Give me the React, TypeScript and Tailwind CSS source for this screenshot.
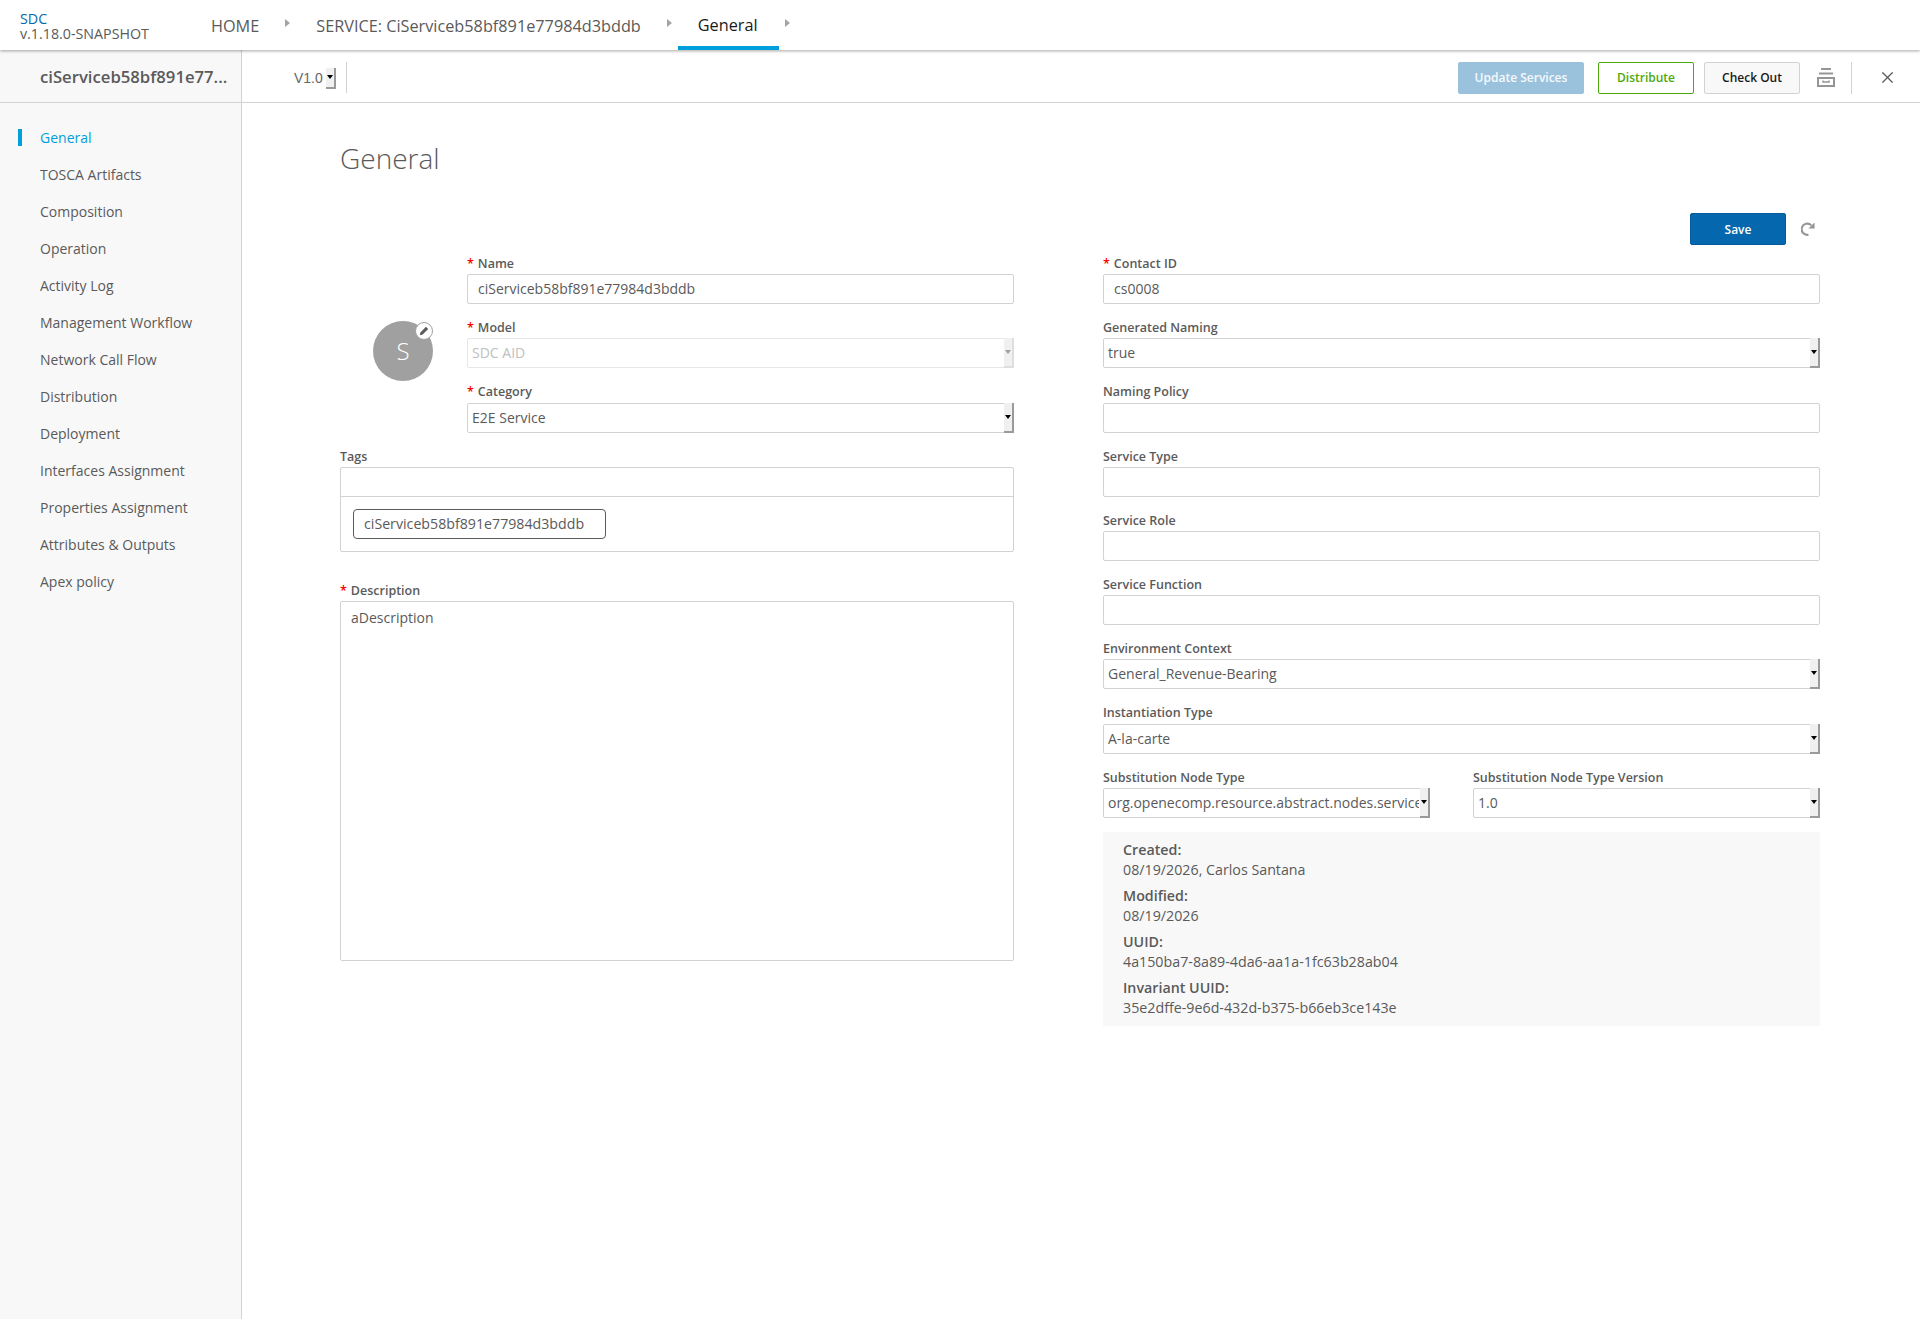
import { X } from 'lucide-react';

const navItems = [
  'General',
  'TOSCA Artifacts',
  'Composition',
  'Operation',
  'Activity Log',
  'Management Workflow',
  'Network Call Flow',
  'Distribution',
  'Deployment',
  'Interfaces Assignment',
  'Properties Assignment',
  'Attributes & Outputs',
  'Apex policy',
];

function Arrow() {
  return <span className="mb-1 mx-[6px] h-0 w-0 border-y-[4px] border-l-[5px] border-y-transparent border-l-[#a3a3a3]" />;
}

function Label({ text, required }: { text: string; required?: boolean }) {
  return (
    <label className="block h-[20.2px] text-[12.5px] font-semibold leading-[20px] text-[#5a5a5a]">
      {required && <span className="mr-1 text-[#f00]">*</span>}
      {text}
    </label>
  );
}

function TextField({ label, required, value = '' }: { label: string; required?: boolean; value?: string }) {
  return (
    <div className="mb-[14px]">
      <Label text={label} required={required} />
      <input
        readOnly
        value={value}
        className="block h-[30px] w-full rounded-[2px] border border-[#d2d2d2] bg-white px-[10px] pb-[2px] text-sm text-[#5a5a5a] outline-none"
      />
    </div>
  );
}

// old style native dropdown button, sits over the right edge of the select
function SelectButton({ disabled }: { disabled?: boolean }) {
  return (
    <span
      className={
        'pointer-events-none absolute bottom-0 right-0 top-0 flex w-[10px] items-center justify-center border-b-2 border-r-2 bg-[#f0f0f0] ' +
        (disabled ? 'border-[#dedede]' : 'border-[#9a9a9a]')
      }
    >
      <span
        className={
          'h-0 w-0 border-x-[3px] border-t-[4px] border-x-transparent ' + (disabled ? 'border-t-[#a0a0a0]' : 'border-t-black')
        }
      />
    </span>
  );
}

function SelectField({
  label,
  required,
  value,
  disabled,
}: {
  label: string;
  required?: boolean;
  value: string;
  disabled?: boolean;
}) {
  return (
    <div className="mb-[14px] min-w-0">
      <Label text={label} required={required} />
      <div className="relative">
        <select
          disabled={disabled}
          defaultValue={value}
          className={
            'block h-[30px] w-full appearance-none rounded-[2px] border bg-white pl-[4px] pr-[10px] text-sm outline-none ' +
            (disabled ? 'border-[#e6e6e6] text-[#c0c0c0]' : 'border-[#d2d2d2] text-[#5a5a5a]')
          }
        >
          <option>{value}</option>
        </select>
        <SelectButton disabled={disabled} />
      </div>
    </div>
  );
}

function InfoRow({ title, value }: { title: string; value: string }) {
  return (
    <div className="mb-[6px] text-[14.25px] leading-[20px] text-[#5a5a5a]">
      <div className="font-semibold">{title}</div>
      <div>{value}</div>
    </div>
  );
}

export default function App() {
  return (
    <div className="flex min-h-screen flex-col bg-white font-['Open_Sans',sans-serif] text-[#5a5a5a]">
      <header className="relative z-10 flex h-[50px] items-center bg-white shadow-[0_1px_3px_rgba(0,0,0,0.35)]">
        <div className="w-[191px] pl-5 pt-[1px] text-[14.25px] leading-[15px]">
          <div className="text-[#0568ae]">SDC</div>
          <div>v.1.18.0-SNAPSHOT</div>
        </div>
        <a className="px-5 pt-[2px] text-[16.25px]">HOME</a>
        <Arrow />
        <a className="px-5 pt-[2px] text-[16.25px]">SERVICE: CiServiceb58bf891e77984d3bddb</a>
        <Arrow />
        <a className="flex h-full items-center border-b-4 border-[#009fdb] pl-5 pr-[21px] pt-[5px] text-[16.25px] text-[#191919]">
          General
        </a>
        <Arrow />
      </header>

      <div className="flex flex-1">
        <aside className="w-[242px] shrink-0 border-r border-[#d2d2d2] bg-[#f8f8f8]">
          <div className="flex h-[53px] items-center truncate border-b border-[#d2d2d2] pl-10 pt-[2px] text-[16.7px] font-semibold">
            ciServiceb58bf891e77...
          </div>
          <ul className="pt-[16px]">
            {navItems.map((item, i) => (
              <li
                key={item}
                className={
                  'relative flex h-[37px] items-center pl-10 text-sm ' + (i === 0 ? 'text-[#009fdb]' : 'text-[#5a5a5a]')
                }
              >
                {i === 0 && <span className="absolute left-[18px] top-[10px] h-[17px] w-1 bg-[#009fdb]" />}
                {item}
              </li>
            ))}
          </ul>
        </aside>

        <main className="min-w-0 flex-1">
          <div className="flex h-[53px] items-center border-b border-[#d2d2d2] pl-[52px] pr-[23px] pt-[3px]">
            <div className="relative mt-[1px] h-[21px] w-[42px]">
              <select
                defaultValue="V1.0"
                className="block h-[21px] w-full appearance-none font-['Liberation_Sans',sans-serif] text-sm text-[#666] outline-none"
              >
                <option>V1.0</option>
              </select>
              <SelectButton />
            </div>
            <span className="ml-[10px] h-[31px] w-px bg-[#d2d2d2]" />
            <div className="ml-auto flex items-center">
              <button className="h-[32px] w-[126px] rounded-[2px] border border-[#9bc2dc] bg-[#9bc2dc] pt-[1px] text-xs font-semibold text-white/90">
                Update Services
              </button>
              <button className="ml-[14px] h-[32px] w-[96px] rounded-[2px] border border-[#4ca90c] bg-white pt-[1px] text-xs font-semibold text-[#4ca90c]">
                Distribute
              </button>
              <button className="ml-[10px] h-[32px] w-[96px] rounded-[2px] border border-[#d2d2d2] bg-[#f8f8f8] pt-[1px] text-xs font-semibold text-[#191919]">
                Check Out
              </button>
              <svg viewBox="0 0 18 19" className="ml-[17px] h-[19px] w-[18px]" fill="none" stroke="#959595" strokeWidth="2">
                <path d="M4 1h10M2 5.5h14" />
                <path d="M1 10h16v8H1z" />
                <path d="M6 12.5v1.5h6v-1.5" strokeWidth="1.5" />
              </svg>
              <span className="ml-[16px] h-[32px] w-px bg-[#d2d2d2]" />
              <X size={19} strokeWidth={1.5} color="#5a5a5a" className="ml-[26px]" />
            </div>
          </div>

          <div className="pl-[98px] pr-[100px]">
            <h1 className="pt-[36px] text-[28px] font-light leading-[38px]">General</h1>
            <div className="mt-[36px] flex items-center justify-end">
              <button className="h-[32px] w-[96px] rounded-[2px] border border-[#045c9c] bg-[#0568ae] pt-[1px] text-xs font-semibold text-white">
                Save
              </button>
              <svg viewBox="0 0 15 15" className="ml-[15px] mr-[5px] h-[14px] w-[14px]" fill="none" stroke="#959595" strokeWidth="2.2">
                <path d="M8 13.6A6 6 0 1 1 11 3.6" />
                <path d="M14.5 .5v6.5H8z" fill="#959595" stroke="none" />
              </svg>
            </div>

            <div className="mt-[9px] flex gap-[89px]">
              <div className="w-[674px] shrink-0">
                <div className="flex">
                  <div className="w-[127px] shrink-0 pl-[33px] pt-[67px]">
                    <div className="relative flex h-[60px] w-[60px] items-center justify-center rounded-full bg-[#a0a0a0] text-[24px] font-light text-white">
                      S
                      <span className="absolute right-0 top-[1px] flex h-[18px] w-[18px] items-center justify-center rounded-full border border-[#a0a0a0] bg-white">
                        <svg viewBox="0 0 10 10" className="h-[10px] w-[10px]" fill="#5a5a5a">
                          <path d="M7 .8l2.2 2.2-5.6 5.6L.8 9.2l.6-2.8z" />
                        </svg>
                      </span>
                    </div>
                  </div>
                  <div className="min-w-0 flex-1">
                    <TextField label="Name" required value="ciServiceb58bf891e77984d3bddb" />
                    <SelectField label="Model" required value="SDC AID" disabled />
                    <SelectField label="Category" required value="E2E Service" />
                  </div>
                </div>

                <Label text="Tags" />
                <div className="h-[85px] rounded-[2px] border border-[#d2d2d2]">
                  <div className="h-[29px] border-b border-[#d2d2d2]" />
                  <div className="pl-3 pt-3">
                    <span className="inline-flex h-[30px] w-[253px] items-center rounded-[4px] border border-[#5a5a5a] pl-[10px] text-[14.2px]">
                      ciServiceb58bf891e77984d3bddb
                    </span>
                  </div>
                </div>

                <div className="mt-[29px]">
                  <Label text="Description" required />
                  <textarea
                    readOnly
                    value="aDescription"
                    className="block h-[360px] w-full resize-none rounded-[2px] border border-[#d2d2d2] px-[10px] py-[6px] text-sm text-[#5a5a5a] outline-none"
                  />
                </div>
              </div>

              <div className="min-w-0 flex-1">
                <TextField label="Contact ID" required value="cs0008" />
                <SelectField label="Generated Naming" value="true" />
                <TextField label="Naming Policy" />
                <TextField label="Service Type" />
                <TextField label="Service Role" />
                <TextField label="Service Function" />
                <SelectField label="Environment Context" value="General_Revenue-Bearing" />
                <SelectField label="Instantiation Type" value="A-la-carte" />
                <div className="grid grid-cols-[327px_347px] gap-x-[43px]">
                  <SelectField label="Substitution Node Type" value="org.openecomp.resource.abstract.nodes.service" />
                  <SelectField label="Substitution Node Type Version" value="1.0" />
                </div>
                <div className="h-[194px] bg-[#f8f8f8] pl-5 pt-[8px]">
                  <InfoRow title="Created:" value="08/19/2026, Carlos Santana" />
                  <InfoRow title="Modified:" value="08/19/2026" />
                  <InfoRow title="UUID:" value="4a150ba7-8a89-4da6-aa1a-1fc63b28ab04" />
                  <InfoRow title="Invariant UUID:" value="35e2dffe-9e6d-432d-b375-b66eb3ce143e" />
                </div>
              </div>
            </div>
          </div>
        </main>
      </div>
    </div>
  );
}
